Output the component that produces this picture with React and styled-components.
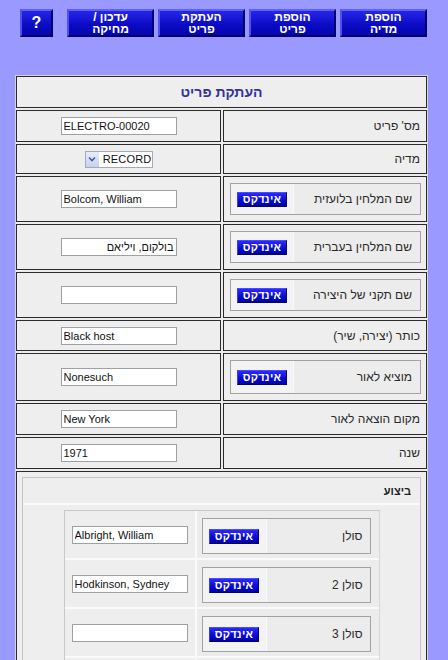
import React from "react";
import styled, { createGlobalStyle } from "styled-components";

const GlobalStyle = createGlobalStyle`
  html, body { margin: 0; padding: 0; background: #9999ff; }
  body { font-family: "Liberation Sans", Arial, sans-serif; }
  * { box-sizing: border-box; }
`;

const Page = styled.div`
  padding: 9px 0 0 15px;
  width: 428px;
`;

const Toolbar = styled.div`
  display: flex;
  direction: rtl;
  gap: 4px;
  padding-right: 1px;
  height: 28px;
  margin-bottom: 38px;
  width: 413px;
`;

const NavButton = styled.div`
  flex: none;
  width: ${(p) => p.$w || 87}px;
  height: 28px;
  margin-right: ${(p) => p.$gapBefore || 0}px;
  display: flex;
  flex-direction: column;
  align-items: center;
  justify-content: center;
  background: linear-gradient(#2626e8, #0a0ac4 60%, #0606b0);
  border: 2px solid;
  border-color: #6060ff #00006e #00006e #5050f4;
  color: #fff;
  font-weight: bold;
  font-size: ${(p) => p.$fs || 12}px;
  line-height: 12px;
  text-align: center;
`;

const Form = styled.div`
  display: grid;
  direction: rtl;
  grid-template-columns: 204px 205px;
  gap: 2px;
  width: 413px;
  border: 1px solid #d4d4d4;
  background: #ececec;
`;

const Cell = styled.div`
  height: ${(p) => (p.$h ? `${p.$h}px` : "auto")};
  border: 1px solid #2b2b2b;
  background: #eeeeee;
  display: flex;
  align-items: center;
`;

const TitleCell = styled(Cell)`
  grid-column: 1 / -1;
  justify-content: center;
  color: #333399;
  font-weight: bold;
  font-size: 14px;
`;

const LabelCell = styled(Cell)`
  justify-content: flex-start;
  padding: 0 6px 0 0;
  font-size: 12px;
  color: #2a2a2a;
`;

const IndexLabelCell = styled(Cell)`
  padding: 0 5px 0 6px;
`;

const ValueCell = styled(Cell)`
  justify-content: center;
`;

const IndexBox = styled.div`
  flex: 1;
  display: flex;
  height: ${(p) => p.$h || 32}px;
  border: 1px solid #a2a2a2;
  background: #ececec;
`;

const IndexLabel = styled.div`
  flex: 1;
  display: flex;
  align-items: center;
  padding-right: ${(p) => p.$pr || 8}px;
  font-size: 12px;
  color: #2a2a2a;
`;

const IndexButtonPart = styled.div`
  width: ${(p) => p.$w || 63}px;
  display: flex;
  align-items: center;
  justify-content: center;
  background: #f3f3f3;
  border-right: 1px solid #fafafa;
`;

const IndexButton = styled.div`
  width: 50px;
  height: 15px;
  display: flex;
  align-items: center;
  justify-content: center;
  background: linear-gradient(#2a2aff, #0a0ad8 55%, #0000a8);
  border: 1px solid;
  border-color: #4a4aff #00006a #00006a #3a3af0;
  color: #fff;
  font-weight: bold;
  font-size: 11px;
  letter-spacing: 0.3px;
`;

const TextInput = styled.input`
  width: 116px;
  height: 18px;
  border: 1px solid #9aa2a8;
  background: #fff;
  font-family: "Liberation Sans", Arial, sans-serif;
  font-size: 11px;
  color: #111;
  padding: 0 2px;
  direction: ${(p) => (p.$rtl ? "rtl" : "ltr")};
  outline: none;
`;

const SelectBox = styled.div`
  width: 68px;
  height: 17px;
  border: 1px solid #a4abb2;
  background: #fff;
  display: flex;
  direction: ltr;
  align-items: center;
  font-size: 11px;
  color: #111;
`;

const SelectArrow = styled.div`
  width: 16px;
  height: 15px;
  background: linear-gradient(#e6ecf8, #c6d3ee);
  border-right: 1px solid #fff;
  display: flex;
  align-items: center;
  justify-content: center;
`;

const SelectValue = styled.div`
  flex: 1;
  padding-left: 3px;
  letter-spacing: 0.2px;
`;

const SectionCell = styled(Cell)`
  grid-column: 1 / -1;
  display: block;
  padding: 5px;
  height: 200px;
`;

const PerformBox = styled.div`
  border: 1px solid #c4c4c4;
  background: #eeeeee;
  height: 190px;
`;

const PerformHeader = styled.div`
  height: 27px;
  border-bottom: 2px solid #fafafa;
  display: flex;
  direction: rtl;
  align-items: center;
  padding-right: 9px;
  font-weight: bold;
  font-size: 11px;
  color: #222;
`;

const PerformGrid = styled.div`
  width: 316px;
  margin: 5px auto 0;
  display: grid;
  direction: rtl;
  grid-template-columns: 182px 130px;
  grid-auto-rows: 47px;
  gap: 2px;
  border-top: 1px solid #c8c8c8;
  border-left: 1px solid #c8c8c8;
  border-right: 1px solid #d8d8d8;
  background: #fafafa;
`;

const PerformLabelCell = styled.div`
  background: #ececec;
  display: flex;
  align-items: flex-start;
  padding: 7px 8px 0 5px;
`;

const PerformValueCell = styled.div`
  background: #eeeeee;
  display: flex;
  align-items: center;
  justify-content: center;
`;

const Chevron = () => (
  <svg width="8" height="6" viewBox="0 0 8 6">
    <path d="M1 1.5 L4 4.5 L7 1.5" fill="none" stroke="#4a5f8f" strokeWidth="1.6" />
  </svg>
);

const IndexRow = ({ label, value, rtl, h, boxH }) => (
  <>
    <IndexLabelCell $h={h}>
      <IndexBox $h={boxH}>
        <IndexLabel>{label}</IndexLabel>
        <IndexButtonPart>
          <IndexButton>אינדקס</IndexButton>
        </IndexButtonPart>
      </IndexBox>
    </IndexLabelCell>
    <ValueCell $h={h}>
      <TextInput defaultValue={value} $rtl={rtl} />
    </ValueCell>
  </>
);

const SimpleRow = ({ label, value, h }) => (
  <>
    <LabelCell $h={h}>{label}</LabelCell>
    <ValueCell $h={h}>
      <TextInput defaultValue={value} />
    </ValueCell>
  </>
);

const performers = [
  { label: "סולן", value: "Albright, William" },
  { label: "סולן 2", value: "Hodkinson, Sydney" },
  { label: "סולן 3", value: "" },
  { label: "סולן 4", value: "" },
];

export default function App() {
  return (
    <>
      <GlobalStyle />
      <Page>
        <Toolbar>
          <NavButton>
            <span>הוספת</span>
            <span>מדיה</span>
          </NavButton>
          <NavButton>
            <span>הוספת</span>
            <span>פריט</span>
          </NavButton>
          <NavButton>
            <span>העתקת</span>
            <span>פריט</span>
          </NavButton>
          <NavButton>
            <span>עדכון /</span>
            <span>מחיקה</span>
          </NavButton>
          <NavButton $w={33} $gapBefore={10} $fs={16}>
            ?
          </NavButton>
        </Toolbar>

        <Form>
          <TitleCell $h={32}>העתקת פריט</TitleCell>
          <SimpleRow label="מס' פריט" value="ELECTRO-00020" h={32} />
          <LabelCell $h={30}>מדיה</LabelCell>
          <ValueCell $h={30}>
            <SelectBox>
              <SelectArrow>
                <Chevron />
              </SelectArrow>
              <SelectValue>RECORD</SelectValue>
            </SelectBox>
          </ValueCell>
          <IndexRow label="שם המלחין בלועזית" value="Bolcom, William" h={46} boxH={32} />
          <IndexRow label="שם המלחין בעברית" value="בולקום, ויליאם" rtl h={46} boxH={32} />
          <IndexRow label="שם תקני של היצירה" value="" h={46} boxH={32} />
          <SimpleRow label="כותר (יצירה, שיר)" value="Black host" h={31} />
          <IndexRow label="מוציא לאור" value="Nonesuch" h={48} boxH={34} />
          <SimpleRow label="מקום הוצאה לאור" value="New York" h={32} />
          <SimpleRow label="שנה" value="1971" h={32} />

          <SectionCell>
            <PerformBox>
              <PerformHeader>ביצוע</PerformHeader>
              <PerformGrid>
                {performers.map((p) => (
                  <React.Fragment key={p.label}>
                    <PerformLabelCell>
                      <IndexBox $h={36}>
                        <IndexLabel $pr={7}>{p.label}</IndexLabel>
                        <IndexButtonPart $w={64}>
                          <IndexButton>אינדקס</IndexButton>
                        </IndexButtonPart>
                      </IndexBox>
                    </PerformLabelCell>
                    <PerformValueCell>
                      <TextInput defaultValue={p.value} />
                    </PerformValueCell>
                  </React.Fragment>
                ))}
              </PerformGrid>
            </PerformBox>
          </SectionCell>
        </Form>
      </Page>
    </>
  );
}
